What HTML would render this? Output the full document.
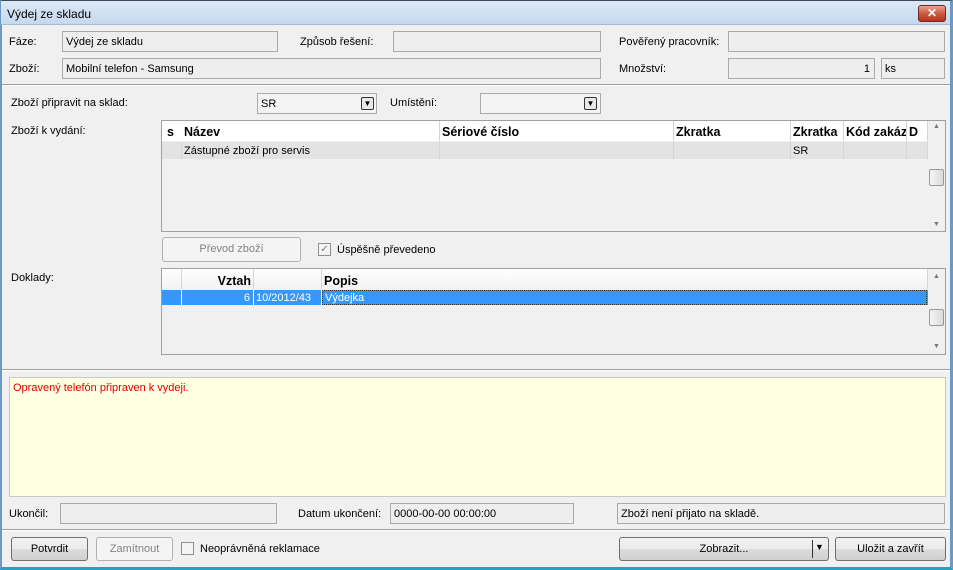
<!DOCTYPE html>
<html><head><meta charset="utf-8"><style>
*{box-sizing:border-box;margin:0;padding:0}
body{width:953px;height:570px;overflow:hidden;background:#f0f0f0;font-family:"Liberation Sans",Tahoma,sans-serif;font-size:11px;color:#000;position:relative}
.a{position:absolute;white-space:nowrap}
.in{position:absolute;border:1px solid #aaa;background:#eee;height:21px;line-height:20px;padding-left:3px;overflow:hidden;white-space:nowrap}
.lb{position:absolute;white-space:nowrap;line-height:14px}
.sep{position:absolute;left:2px;right:3px;height:2px;border-top:1px solid #a0a0a0;border-bottom:1px solid #fff}
.btn{position:absolute;border:1px solid #707070;border-radius:3px;background:linear-gradient(#f2f2f2,#ebebeb 50%,#dcdcdc 51%,#cfcfcf);text-align:center;line-height:22px;height:24px}
.btn.dis{border-color:#adb2b5;background:#f4f4f4;color:#838383}
.grid{position:absolute;border:1px solid #a0a0a0;background:#f0f0f0;overflow:hidden}
.c{position:absolute;top:0;height:100%;border-right:1px solid #d5d5d5;overflow:hidden;white-space:nowrap;padding-left:2px}
.hd{font-weight:bold;font-size:12.5px}
.sb{position:absolute;right:0;top:0;bottom:0;width:17px;background:#f0f0f0}
.thumb{position:absolute;left:1px;width:15px;height:17px;border:1px solid #999;border-radius:2px;background:linear-gradient(90deg,#f4f4f4,#dcdcdc)}
.chk{position:absolute;width:13px;height:13px;border:1px solid #8e8f8f;background:#f4f4f4}
</style></head><body>
<div class="a" style="left:0;top:0;width:953px;height:570px;border:1px solid #3a4a5a;border-right:3px solid #6b98c7;border-bottom:3px solid #2aa0c0;border-left:2px solid #6b98c7"></div>
<div class="a" style="left:1px;top:1px;width:949px;height:24px;background:linear-gradient(#dde9f6,#c5d9ee);border-bottom:1px solid #a7bcd4"></div>
<div class="lb" style="left:7px;top:7px;font-size:12px">Výdej ze skladu</div>
<div class="a" style="left:918px;top:5px;width:28px;height:17px;border:1px solid #6d2a22;border-radius:3px;background:linear-gradient(#e9a493,#cf5a43 50%,#b8341d);color:#fff;text-align:center;font-weight:bold;font-size:12px;line-height:15px">✕</div>

<div class="lb" style="left:9px;top:35px">Fáze:</div>
<div class="in" style="left:62px;top:31px;width:216px">Výdej ze skladu</div>
<div class="lb" style="left:300px;top:35px">Způsob řešení:</div>
<div class="in" style="left:393px;top:31px;width:208px"></div>
<div class="lb" style="left:619px;top:35px">Pověřený pracovník:</div>
<div class="in" style="left:728px;top:31px;width:217px"></div>
<div class="lb" style="left:9px;top:62px">Zboží:</div>
<div class="in" style="left:62px;top:58px;width:539px">Mobilní telefon - Samsung</div>
<div class="lb" style="left:619px;top:62px">Množství:</div>
<div class="in" style="left:728px;top:58px;width:147px;text-align:right;padding-right:4px">1</div>
<div class="in" style="left:881px;top:58px;width:64px">ks</div>
<div class="sep" style="top:84px"></div>

<div class="lb" style="left:11px;top:96px">Zboží připravit na sklad:</div>
<div class="in" style="left:257px;top:93px;width:120px;background:#f4f4f4">SR</div>
<div class="a" style="left:361px;top:97px;width:13px;height:13px;border:1px solid #333;border-radius:2px;background:#e8e8e8;font-size:8px;text-align:center;line-height:12px">▼</div>
<div class="lb" style="left:390px;top:96px">Umístění:</div>
<div class="in" style="left:480px;top:93px;width:121px;background:#f4f4f4"></div>
<div class="a" style="left:584px;top:97px;width:13px;height:13px;border:1px solid #333;border-radius:2px;background:#e8e8e8;font-size:8px;text-align:center;line-height:12px">▼</div>

<div class="lb" style="left:11px;top:124px">Zboží k vydání:</div>
<div class="grid" style="left:161px;top:120px;width:785px;height:112px">
 <div class="a" style="left:0;top:0;width:766px;height:20px;background:#fff">
  <div class="c hd" style="left:0;width:20px;border:0;padding-left:5px;line-height:22px">s</div>
  <div class="c hd" style="left:20px;width:258px;line-height:22px">Název</div>
  <div class="c hd" style="left:278px;width:234px;line-height:22px">Sériové číslo</div>
  <div class="c hd" style="left:512px;width:117px;line-height:22px">Zkratka</div>
  <div class="c hd" style="left:629px;width:53px;line-height:22px">Zkratka</div>
  <div class="c hd" style="left:682px;width:63px;line-height:22px">Kód zakáz</div>
  <div class="c hd" style="left:745px;width:21px;line-height:22px">D</div>
 </div>
 <div class="a" style="left:0;top:21px;width:766px;height:17px;background:#e3e3e3;line-height:18px">
  <div class="c" style="left:0;width:20px"></div>
  <div class="c" style="left:20px;width:258px">Zástupné zboží pro servis</div>
  <div class="c" style="left:278px;width:234px"></div>
  <div class="c" style="left:512px;width:117px"></div>
  <div class="c" style="left:629px;width:53px">SR</div>
  <div class="c" style="left:682px;width:63px"></div>
  <div class="c" style="left:745px;width:21px"></div>
 </div>
 <div class="sb"><div class="a" style="left:5px;top:2px;font-size:7px;color:#777">▲</div><div class="thumb" style="top:48px"></div><div class="a" style="left:5px;bottom:3px;font-size:7px;color:#777">▼</div></div>
</div>

<div class="btn dis" style="left:162px;top:237px;width:139px;height:25px">Převod zboží</div>
<div class="chk" style="left:318px;top:243px;color:#777;font-size:10px;line-height:11px;text-align:center">✓</div>
<div class="lb" style="left:337px;top:243px">Úspěšně převedeno</div>

<div class="lb" style="left:11px;top:271px">Doklady:</div>
<div class="grid" style="left:161px;top:268px;width:785px;height:87px">
 <div class="a" style="left:0;top:0;width:766px;height:20px;background:linear-gradient(#fff,#f2f2f2)">
  <div class="c" style="left:0;width:20px"></div>
  <div class="c hd" style="left:20px;width:72px;text-align:right;padding-right:2px;line-height:24px">Vztah</div>
  <div class="c" style="left:92px;width:68px"></div>
  <div class="c hd" style="left:160px;width:606px;line-height:24px">Popis</div>
 </div>
 <div class="a" style="left:0;top:21px;width:766px;height:15px;background:#3399ff;color:#fff;line-height:16px">
  <div class="c" style="left:0;width:20px;border-color:#fff"></div>
  <div class="c" style="left:20px;width:72px;text-align:right;padding-right:3px;border-color:#fff">6</div>
  <div class="c" style="left:92px;width:68px;border-color:#fff">10/2012/43</div>
  <div class="c" style="left:160px;width:605px;border:1px dotted #333;line-height:14px">Výdejka</div>
 </div>
 <div class="sb"><div class="a" style="left:5px;top:4px;font-size:7px;color:#777">▲</div><div class="thumb" style="top:40px"></div><div class="a" style="left:5px;bottom:4px;font-size:7px;color:#777">▼</div></div>
</div>
<div class="sep" style="top:369px"></div>

<div class="a" style="left:9px;top:377px;width:937px;height:120px;background:#ffffe1;border:1px solid #c8c8c8;color:#e00000;padding:4px 3px">Opravený telefón připraven k vydeji.</div>

<div class="lb" style="left:9px;top:507px">Ukončil:</div>
<div class="in" style="left:60px;top:503px;width:217px"></div>
<div class="lb" style="left:298px;top:507px">Datum ukončení:</div>
<div class="in" style="left:390px;top:503px;width:184px">0000-00-00 00:00:00</div>
<div class="in" style="left:617px;top:503px;width:328px">Zboží není přijato na skladě.</div>
<div class="sep" style="top:529px"></div>

<div class="btn" style="left:11px;top:537px;width:77px">Potvrdit</div>
<div class="btn dis" style="left:96px;top:537px;width:77px">Zamítnout</div>
<div class="chk" style="left:181px;top:542px"></div>
<div class="lb" style="left:200px;top:542px">Neoprávněná reklamace</div>
<div class="btn" style="left:619px;top:537px;width:210px">Zobrazit...</div>
<div class="a" style="left:812px;top:540px;width:1px;height:18px;background:#333"></div>
<div class="a" style="left:815px;top:542px;font-size:9px">▼</div>
<div class="btn" style="left:835px;top:537px;width:111px">Uložit a zavřít</div>
</body></html>
